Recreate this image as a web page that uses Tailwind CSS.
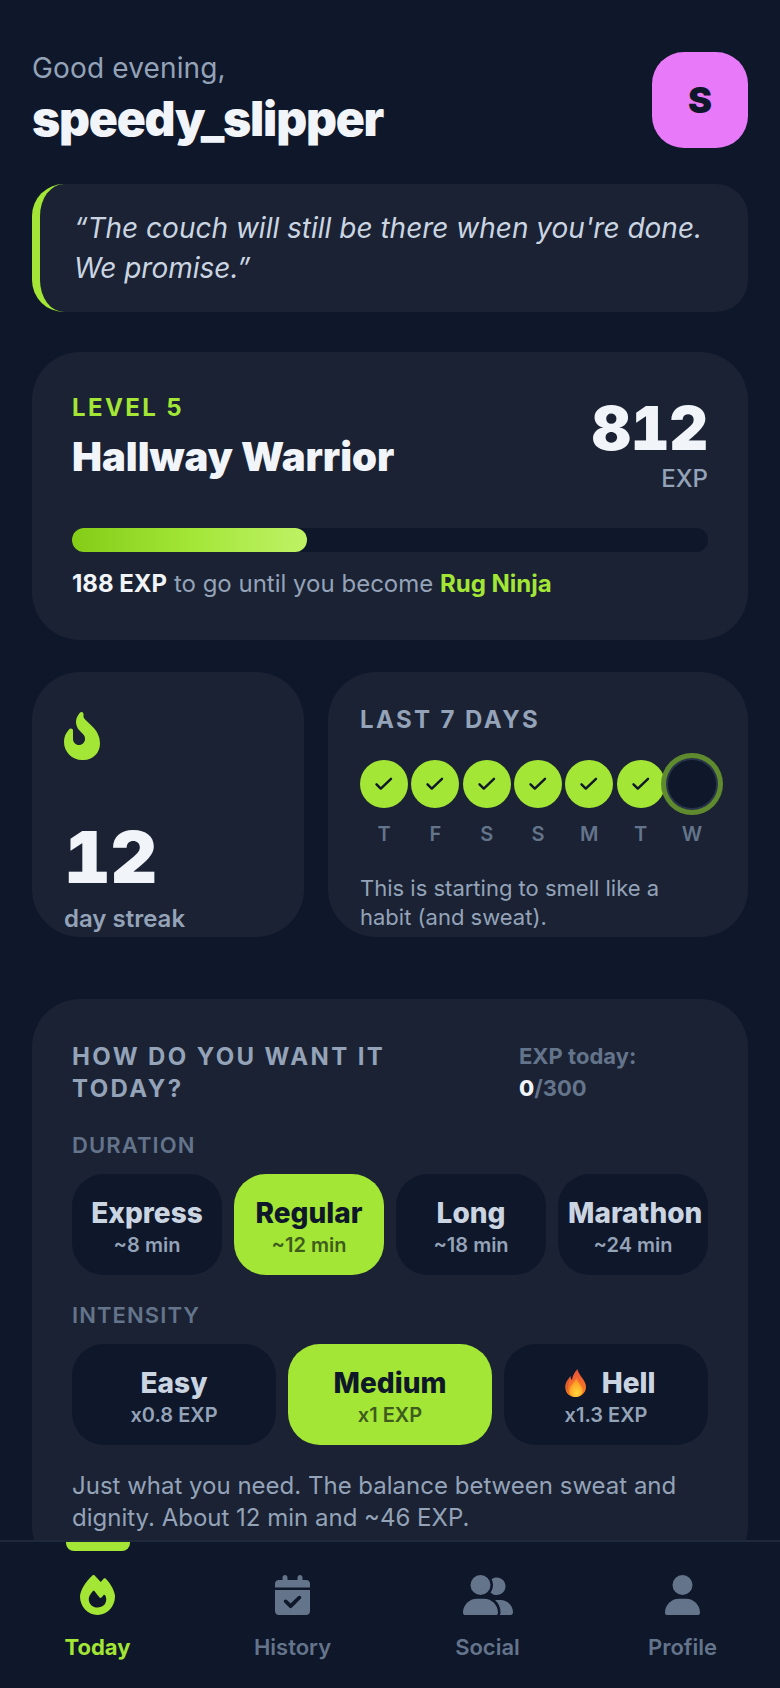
<!DOCTYPE html>
<html lang="en">
<head>
  <meta charset="UTF-8" />
  <meta name="viewport" content="width=device-width, initial-scale=1.0" />
  <title>Today</title>
  <script src="https://cdn.jsdelivr.net/npm/@tailwindcss/browser@4"></script>
</head>
<body class="bg-[#0f172a] font-[Inter,sans-serif]">
  <div class="relative w-[780px] h-[1688px] overflow-hidden">
    <main class="px-8 pt-[52px] flex flex-col">
      <!-- Header -->
      <header class="flex justify-between h-24">
        <div>
          <p class="text-[28px] leading-[32px] tracking-[0.15px] text-[#94a3b8]">Good evening,</p>
          <h1 class="mt-[5px] text-[48px] leading-[60px] font-black tracking-tight text-[#f1f5f9]">speedy_slipper</h1>
        </div>
        <div class="w-24 h-24 rounded-[32px] bg-[#e879f9] flex items-center justify-center text-[36px] font-black text-[#0f172a]">S</div>
      </header>

      <!-- Quote -->
      <div class="mt-9 h-32 rounded-[32px] border-l-8 border-[#a3e635] bg-[#1a2234] pl-[34px] pr-8 flex items-center">
        <p class="text-[28px] leading-[40px] italic text-[#cbd5e1]">“The couch will still be there when you're done. We promise.”</p>
      </div>

      <!-- Level -->
      <section class="mt-10 h-[288px] rounded-[48px] bg-[#1a2234] p-10">
        <div class="flex justify-between h-[136px]">
          <div>
            <p class="text-[24px] leading-[32px] font-bold tracking-[2.4px] text-[#a3e635]">LEVEL 5</p>
            <h2 class="mt-2 text-[40px] leading-[50px] font-black text-[#f1f5f9]">Hallway Warrior</h2>
          </div>
          <div class="text-right">
            <p class="mt-[6px] text-[60px] leading-[60px] font-black tabular-nums text-[#f1f5f9]">812</p>
            <p class="mt-[5px] text-[24px] leading-[32px] font-medium text-[#94a3b8]">EXP</p>
          </div>
        </div>
        <div class="h-6 rounded-full bg-[#0f172a]">
          <div class="h-6 w-[37%] rounded-full bg-gradient-to-r from-[#84cc16] via-[#a3e635] to-[#bef264]"></div>
        </div>
        <p class="mt-4 text-[24px] leading-[32px] text-[#94a3b8]"><b class="font-bold text-[#f1f5f9]">188 EXP</b> to go until you become <b class="font-bold text-[#a3e635]">Rug Ninja</b></p>
      </section>

      <!-- Streak + last 7 days -->
      <div class="mt-8 flex gap-6 h-[265px]">
        <section class="w-[272px] rounded-[48px] bg-[#1a2234] px-8 pt-10">
          <svg class="w-9 h-12 text-[#a3e635]" viewBox="0 0 384 512" fill="currentColor"><path d="M153.6 29.9l16-21.3C173.6 3.2 180 0 186.7 0C198.4 0 208 9.6 208 21.3V43.5c0 13.1 5.4 25.7 14.9 34.7L307.6 159C356.4 205.6 384 270.2 384 337.7C384 434 306 512 209.7 512H192C86 512 0 426 0 320v-3.8c0-48.8 19.4-95.6 53.9-130.1l3.5-3.5c4.2-4.2 10-6.6 16-6.6C85.9 176 96 186.1 96 198.6V288c0 35.3 28.7 64 64 64s64-28.7 64-64v-3.9c0-18-7.2-35.3-19.9-48l-38.6-38.6c-24-24-37.5-56.7-37.5-90.7c0-27.7 9-54.8 25.6-76.9z"/></svg>
          <p class="mt-[61px] text-[72px] leading-[72px] font-black tabular-nums text-[#f1f5f9]">12</p>
          <p class="mt-[10px] text-[24px] leading-[32px] font-semibold text-[#94a3b8]">day streak</p>
        </section>
        <section class="flex-1 rounded-[48px] bg-[#1a2234] px-8 pt-8">
          <p class="text-[24px] leading-[32px] font-bold tracking-[2.4px] text-[#94a3b8]">LAST 7 DAYS</p>
          <div class="mt-6 flex justify-between">
            <div class="w-12 flex flex-col items-center">
              <span class="w-12 h-12 rounded-full bg-[#a3e635] flex items-center justify-center"><svg class="w-6 h-6" viewBox="0 0 24 24" fill="none" stroke="#0f172a" stroke-width="2.4" stroke-linecap="round" stroke-linejoin="round"><path d="M4.500 12.300 8.800 16.600 19 6.800"/></svg></span>
              <span class="mt-[14px] text-[20px] leading-[24px] font-semibold text-[#64748b]">T</span>
            </div>
            <div class="w-12 flex flex-col items-center">
              <span class="w-12 h-12 rounded-full bg-[#a3e635] flex items-center justify-center"><svg class="w-6 h-6" viewBox="0 0 24 24" fill="none" stroke="#0f172a" stroke-width="2.4" stroke-linecap="round" stroke-linejoin="round"><path d="M4.500 12.300 8.800 16.600 19 6.800"/></svg></span>
              <span class="mt-[14px] text-[20px] leading-[24px] font-semibold text-[#64748b]">F</span>
            </div>
            <div class="w-12 flex flex-col items-center">
              <span class="w-12 h-12 rounded-full bg-[#a3e635] flex items-center justify-center"><svg class="w-6 h-6" viewBox="0 0 24 24" fill="none" stroke="#0f172a" stroke-width="2.4" stroke-linecap="round" stroke-linejoin="round"><path d="M4.500 12.300 8.800 16.600 19 6.800"/></svg></span>
              <span class="mt-[14px] text-[20px] leading-[24px] font-semibold text-[#64748b]">S</span>
            </div>
            <div class="w-12 flex flex-col items-center">
              <span class="w-12 h-12 rounded-full bg-[#a3e635] flex items-center justify-center"><svg class="w-6 h-6" viewBox="0 0 24 24" fill="none" stroke="#0f172a" stroke-width="2.4" stroke-linecap="round" stroke-linejoin="round"><path d="M4.500 12.300 8.800 16.600 19 6.800"/></svg></span>
              <span class="mt-[14px] text-[20px] leading-[24px] font-semibold text-[#64748b]">S</span>
            </div>
            <div class="w-12 flex flex-col items-center">
              <span class="w-12 h-12 rounded-full bg-[#a3e635] flex items-center justify-center"><svg class="w-6 h-6" viewBox="0 0 24 24" fill="none" stroke="#0f172a" stroke-width="2.4" stroke-linecap="round" stroke-linejoin="round"><path d="M4.500 12.300 8.800 16.600 19 6.800"/></svg></span>
              <span class="mt-[14px] text-[20px] leading-[24px] font-semibold text-[#64748b]">M</span>
            </div>
            <div class="w-12 flex flex-col items-center">
              <span class="w-12 h-12 rounded-full bg-[#a3e635] flex items-center justify-center"><svg class="w-6 h-6" viewBox="0 0 24 24" fill="none" stroke="#0f172a" stroke-width="2.4" stroke-linecap="round" stroke-linejoin="round"><path d="M4.500 12.300 8.800 16.600 19 6.800"/></svg></span>
              <span class="mt-[14px] text-[20px] leading-[24px] font-semibold text-[#64748b]">T</span>
            </div>
            <div class="w-12 flex flex-col items-center">
              <span class="w-12 h-12 rounded-full bg-[#0f172a] shadow-[0_0_0_2px_#27344a,0_0_0_7px_#5f8b2e]"></span>
              <span class="mt-[14px] text-[20px] leading-[24px] font-semibold text-[#64748b]">W</span>
            </div>
          </div>
          <p class="mt-[28px] text-[22px] leading-[29px] text-[#94a3b8]">This is starting to smell like a habit (and sweat).</p>
        </section>
      </div>

      <!-- Session picker -->
      <section class="mt-[62px] rounded-[48px] bg-[#1a2234] p-10 pt-[42px]">
        <div class="flex justify-between">
          <p class="w-[340px] text-[24px] leading-[32px] font-bold tracking-[2.4px] text-[#94a3b8]">HOW DO YOU WANT IT TODAY?</p>
          <div class="w-[189px] -mt-px">
            <p class="text-[22px] leading-[32px] font-bold text-[#64748b]">EXP today:</p>
            <p class="text-[22px] leading-[32px] font-bold text-[#64748b]"><b class="font-extrabold text-[#f1f5f9]">0</b>/300</p>
          </div>
        </div>
        <p class="mt-[26px] text-[22px] leading-[28px] font-semibold tracking-[1.1px] text-[#64748b]">DURATION</p>
        <div class="mt-[15px] grid grid-cols-4 gap-3">
          <button class="h-[101px] pt-[3px] rounded-[32px] bg-[#0f172a] flex flex-col items-center justify-center">
            <span class="text-[28px] leading-[36px] font-extrabold text-[#cbd5e1]">Express</span>
            <span class="mt-px text-[20px] leading-[26px] font-semibold text-[#94a3b8]">~8 min</span>
          </button>
          <button class="h-[101px] pt-[3px] rounded-[32px] bg-[#a3e635] flex flex-col items-center justify-center">
            <span class="text-[28px] leading-[36px] font-extrabold text-[#0f172a]">Regular</span>
            <span class="mt-px text-[20px] leading-[26px] font-semibold text-[#3e5c1d]">~12 min</span>
          </button>
          <button class="h-[101px] pt-[3px] rounded-[32px] bg-[#0f172a] flex flex-col items-center justify-center">
            <span class="text-[28px] leading-[36px] font-extrabold text-[#cbd5e1]">Long</span>
            <span class="mt-px text-[20px] leading-[26px] font-semibold text-[#94a3b8]">~18 min</span>
          </button>
          <button class="h-[101px] pt-[3px] rounded-[32px] bg-[#0f172a] flex flex-col items-center justify-center">
            <span class="self-start ml-[10px] text-[28px] leading-[36px] font-extrabold text-[#cbd5e1] whitespace-nowrap">Marathon</span>
            <span class="mt-px text-[20px] leading-[26px] font-semibold text-[#94a3b8]">~24 min</span>
          </button>
        </div>
        <p class="mt-[26px] text-[22px] leading-[28px] font-semibold tracking-[1.1px] text-[#64748b]">INTENSITY</p>
        <div class="mt-[15px] grid grid-cols-3 gap-3">
          <button class="h-[101px] pt-[3px] rounded-[32px] bg-[#0f172a] flex flex-col items-center justify-center">
            <span class="text-[28px] leading-[36px] font-extrabold text-[#cbd5e1]">Easy</span>
            <span class="mt-px text-[20px] leading-[26px] font-semibold text-[#94a3b8]">x0.8 EXP</span>
          </button>
          <button class="h-[101px] pt-[3px] rounded-[32px] bg-[#a3e635] flex flex-col items-center justify-center">
            <span class="text-[28px] leading-[36px] font-extrabold text-[#0f172a]">Medium</span>
            <span class="mt-px text-[20px] leading-[26px] font-semibold text-[#3e5c1d]">x1 EXP</span>
          </button>
          <button class="h-[101px] pt-[3px] rounded-[32px] bg-[#0f172a] flex flex-col items-center justify-center">
            <span class="flex items-center gap-[15px] text-[28px] leading-[36px] font-extrabold text-[#cbd5e1]">
              <svg class="ml-[7px] w-[23px] h-7" viewBox="0 0 22 28">
                <defs>
                  <linearGradient id="flameOuter" x1="0" y1="0" x2="0" y2="1"><stop offset="0" stop-color="#e8503a"/><stop offset="1" stop-color="#ff8a1f"/></linearGradient>
                  <radialGradient id="flameInner" cx="0.55" cy="0.8" r="0.75"><stop offset="0" stop-color="#ffd83b"/><stop offset="1" stop-color="#ff8f1f"/></radialGradient>
                </defs>
                <path fill="url(#flameOuter)" d="M13 0C13.5 5 19 9 21 15C23 22 18 28 11 28C4 28 0 23 1 16C1.500 12.500 4 10 6 7C6 9 6.500 10 7.500 11C8 7 10 3 13 0Z"/>
                <path fill="#c9502f" opacity="0.55" d="M6 7C5 12 3 16 4 22C4.500 24 5 25 6 26C3 24 1 20 1 16C1.500 12.500 4 10 6 7Z"/>
                <path fill="url(#flameInner)" d="M12 9C12.500 13 18 17 18 21.500C18 25.500 15 28 11 28C7 28 5 25.500 5 21.500C5 16.500 10 14 12 9Z"/>
              </svg>
              Hell
            </span>
            <span class="mt-px text-[20px] leading-[26px] font-semibold text-[#94a3b8]">x1.3 EXP</span>
          </button>
        </div>
        <p class="mt-[25px] text-[24px] leading-[32px] text-[#94a3b8]">Just what you need. The balance between sweat and dignity. About 12 min and ~46 EXP.</p>
      </section>
    </main>

    <!-- Bottom nav -->
    <nav class="absolute left-0 right-0 bottom-0 h-[148px] border-t-2 border-[#1e293b] bg-[#0f172a] grid grid-cols-4">
      <a class="relative flex flex-col items-center pt-[33px] text-[#a3e635]">
        <span class="absolute top-0 w-16 h-[9px] rounded-b-lg bg-[#a3e635]"></span>
        <svg class="h-10 w-[35px]" viewBox="0 0 448 512" fill="currentColor"><path d="M159.3 5.4c7.8-7.3 19.9-7.2 27.7 .1c27.6 25.9 53.5 53.8 77.7 84c11-14.4 23.5-30.1 37-42.9c7.9-7.4 20.1-7.4 28 .1c34.6 33 63.9 76.6 84.5 118c20.3 40.8 33.8 82.5 33.8 111.9C448 404.2 348.2 512 224 512C98.4 512 0 404.1 0 276.5c0-38.4 17.8-85.3 45.4-131.7C73.3 97.7 112.7 48.6 159.3 5.4zM225.7 416c25.3 0 47.7-7 68.8-21c42.1-29.4 53.4-88.2 28.1-134.4c-4.5-9-16-9.6-22.5-2l-25.2 29.3c-6.6 7.6-18.5 7.4-24.7-.5c-16.5-21-46-58.5-62.8-79.8c-6.3-8-18.3-8.1-24.7-.1c-33.8 42.5-50.8 69.3-50.8 99.4C112 375.4 162.6 416 225.7 416z"/></svg>
        <span class="mt-[16px] text-[22px] leading-[32px] font-bold">Today</span>
      </a>
      <a class="flex flex-col items-center pt-[33px] text-[#64748b]">
        <svg class="h-10 w-[35px]" viewBox="0 0 448 512" fill="currentColor"><path d="M128 0c17.7 0 32 14.3 32 32V64H288V32c0-17.7 14.3-32 32-32s32 14.3 32 32V64h48c26.5 0 48 21.5 48 48v48H0V112C0 85.5 21.5 64 48 64H96V32c0-17.7 14.3-32 32-32zM0 192H448V464c0 26.5-21.5 48-48 48H48c-26.5 0-48-21.5-48-48V192zM329 305c9.4-9.4 9.4-24.6 0-33.9s-24.6-9.4-33.9 0l-95 95-47-47c-9.4-9.4-24.6-9.4-33.9 0s-9.4 24.6 0 33.9l64 64c9.4 9.4 24.6 9.4 33.9 0L329 305z"/></svg>
        <span class="mt-[16px] text-[22px] leading-[32px] font-semibold">History</span>
      </a>
      <a class="flex flex-col items-center pt-[33px] text-[#64748b]">
        <svg class="h-10 w-[50px]" viewBox="0 0 640 512" fill="currentColor"><path d="M96 128a128 128 0 1 1 256 0A128 128 0 1 1 96 128zM0 482.3C0 383.8 79.8 304 178.3 304h91.4C368.2 304 448 383.8 448 482.3c0 16.4-13.3 29.7-29.7 29.7H29.7C13.3 512 0 498.7 0 482.3zM609.3 512H471.4c5.4-9.4 8.6-20.3 8.6-32v-8c0-60.7-27.1-115.2-69.8-151.8c2.4-.1 4.7-.2 7.1-.2h61.4C567.8 320 640 392.2 640 481.3c0 17-13.8 30.7-30.7 30.7zM432 256c-31 0-59-12.6-79.3-32.9C372.4 196.5 384 163.6 384 128c0-26.8-6.6-52.1-18.3-74.3C384.3 40.1 407.2 32 432 32c61.9 0 112 50.1 112 112s-50.1 112-112 112z"/></svg>
        <span class="mt-[16px] text-[22px] leading-[32px] font-semibold">Social</span>
      </a>
      <a class="flex flex-col items-center pt-[33px] text-[#64748b]">
        <svg class="h-10 w-[35px]" viewBox="0 0 448 512" fill="currentColor"><path d="M224 256A128 128 0 1 0 224 0a128 128 0 1 0 0 256zm-45.7 48C79.8 304 0 383.8 0 482.3C0 498.7 13.3 512 29.7 512H418.3c16.4 0 29.7-13.3 29.7-29.7C448 383.8 368.2 304 269.7 304H178.3z"/></svg>
        <span class="mt-[16px] text-[22px] leading-[32px] font-semibold">Profile</span>
      </a>
    </nav>
  </div>
</body>
</html>
